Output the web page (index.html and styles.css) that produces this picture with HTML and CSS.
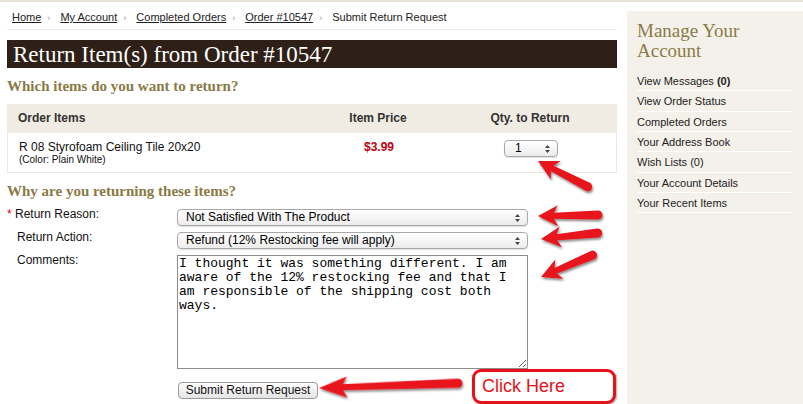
FILE: index.html
```html
<!DOCTYPE html>
<html lang="en">
<head>
  <meta charset="UTF-8">
  <meta name="viewport" content="width=device-width, initial-scale=1.0">
  <link rel="stylesheet" href="styles.css">
  <title>Submit Return Request</title>
</head>
<body>
  <div class="page">
    <div class="main">
      <div class="crumbs">
        <a href="#">Home</a><span class="sep">›</span>
        <a href="#">My Account</a><span class="sep">›</span>
        <a href="#">Completed Orders</a><span class="sep">›</span>
        <a href="#">Order #10547</a><span class="sep">›</span>
        <span>Submit Return Request</span>
      </div>

      <h1 class="title">Return Item(s) from Order #10547</h1>

      <h2 class="section">Which items do you want to return?</h2>
      <div class="items">
        <div class="items-head">
          <div>Order Items</div>
          <div class="center">Item Price</div>
          <div class="center">Qty. to Return</div>
        </div>
        <div class="items-row">
          <div>
            <div class="item-name">R 08 Styrofoam Ceiling Tile 20x20</div>
            <div class="item-opt">(Color: Plain White)</div>
          </div>
          <div class="center price">$3.99</div>
          <div class="center">
            <select class="qty">
              <option>1</option>
              <option>0</option>
            </select>
          </div>
        </div>
      </div>

      <h2 class="section">Why are you returning these items?</h2>
      <form class="return-form">
        <label class="req"><span class="star">*</span> Return Reason:</label>
        <select class="wide">
          <option>Not Satisfied With The Product</option>
          <option>Damaged In Shipping</option>
          <option>Wrong Item Received</option>
        </select>

        <label>Return Action:</label>
        <select class="wide">
          <option>Refund (12% Restocking fee will apply)</option>
          <option>Exchange</option>
        </select>

        <label>Comments:</label>
        <textarea class="comments">I thought it was something different. I am aware of the 12% restocking fee and that I am responsible of the shipping cost both ways.</textarea>

        <div></div>
        <div class="actions">
          <button type="button" class="submit">Submit Return Request</button>
        </div>
      </form>
    </div>

    <aside class="sidebar">
      <h3 class="side-title">Manage Your Account</h3>
      <ul class="side-links">
        <li><a href="#">View Messages <b>(0)</b></a></li>
        <li><a href="#">View Order Status</a></li>
        <li><a href="#">Completed Orders</a></li>
        <li><a href="#">Your Address Book</a></li>
        <li><a href="#">Wish Lists (0)</a></li>
        <li><a href="#">Your Account Details</a></li>
        <li><a href="#">Your Recent Items</a></li>
      </ul>
    </aside>
  </div>

  <!-- annotations drawn over the page -->
  <div class="callout">Click Here</div>
  <svg class="arrows" width="803" height="404" viewBox="0 0 803 404">
    <defs>
      <filter id="shadow" x="-20%" y="-50%" width="140%" height="200%">
        <feDropShadow dx="1" dy="2" stdDeviation="1.2" flood-color="#000" flood-opacity="0.45"/>
      </filter>
    </defs>
    <g fill="#e8141c" filter="url(#shadow)">
      <path transform="translate(538 161) rotate(27.5)" d="M0 0L20-10.5L16-3L56-4.5A4.5 4.5 0 0 1 56 4.5L16 3L20 10.5Z"/>
      <path transform="translate(538 216) rotate(-1)" d="M0 0L20-10.5L16-3L60-4.5A4.5 4.5 0 0 1 60 4.5L16 3L20 10.5Z"/>
      <path transform="translate(541 239) rotate(-6)" d="M0 0L20-10.5L16-3L57-4.5A4.5 4.5 0 0 1 57 4.5L16 3L20 10.5Z"/>
      <path transform="translate(541 277) rotate(-23)" d="M0 0L20-10.5L16-3L56-4.5A4.5 4.5 0 0 1 56 4.5L16 3L20 10.5Z"/>
      <path transform="translate(319 388) rotate(-2)" d="M0 0L28-10.5L24-3L139-4.5A4.5 4.5 0 0 1 139 4.5L24 3L28 10.5Z"/>
    </g>
  </svg>
</body>
</html>
```

FILE: styles.css
```css
body {
  margin: 0;
  width: 803px;
  height: 404px;
  overflow: hidden;
  font-family: "Liberation Sans", Arial, sans-serif;
  color: #222;
  background: #fff;
  position: relative;
}

.page {
  display: flex;
  gap: 10px;
  padding-left: 7px;
  border-top: 2px solid #e9e4d8;
  min-height: 402px;
}

.main {
  width: 610px;
  flex: none;
}

/*migas de pan*/
.crumbs {
  padding: 8px 5px 4px;
  font-size: 11px;
  line-height: 14px;
  border-bottom: 1px solid #ece8df;
}

.crumbs a {
  color: #222;
  text-decoration: underline;
}

.crumbs .sep {
  color: #999;
  font-size: 9px;
  margin: 0 7px 0 6px;
}

.title {
  margin: 10px 0 0;
  height: 28px;
  line-height: 29px;
  padding-left: 6px;
  background: #2e2017;
  color: #fff;
  font-family: "Liberation Serif", "Times New Roman", serif;
  font-size: 23px;
  font-weight: normal;
}

.section {
  margin: 9px 0;
  font-family: "Liberation Serif", "Times New Roman", serif;
  font-size: 15px;
  line-height: 18px;
  font-weight: bold;
  color: #8a7a46;
}

/*tabla de productos*/
.items-head,
.items-row {
  display: grid;
  grid-template-columns: 306px 130px 174px;
}

.items-head {
  height: 29px;
  line-height: 29px;
  background: #f0ece3;
  font-size: 12px;
  font-weight: bold;
  color: #333;
}

.items-head > div:first-child,
.items-row > div:first-child {
  padding-left: 11px;
}

.items-row {
  padding: 7px 0 7px;
  border: 1px solid #ece8df;
  border-top: none;
  height: 25px;
}

.center {
  text-align: center;
}

.item-name {
  font-size: 12px;
  line-height: 14px;
  color: #111;
}

.item-opt {
  font-size: 10px;
  line-height: 11px;
  color: #111;
}

.price {
  font-size: 12px;
  line-height: 14px;
  font-weight: bold;
  color: #c00010;
}

/*selects tipo mac*/
select {
  appearance: none;
  -webkit-appearance: none;
  box-sizing: border-box;
  height: 17px;
  margin: 0;
  padding: 0 20px 0 8px;
  border: 1px solid #a8a8a8;
  border-radius: 4px;
  font-family: "Liberation Sans", Arial, sans-serif;
  font-size: 12px;
  line-height: 15px;
  color: #000;
  background: url("data:image/svg+xml,%3Csvg xmlns='http://www.w3.org/2000/svg' width='5' height='8'%3E%3Cpath d='M0 3L2.5 0L5 3Z M0 5L2.5 8L5 5Z' fill='%23444'/%3E%3C/svg%3E") no-repeat right 7px center,
    linear-gradient(#ffffff, #ececec);
  box-shadow: 0 1px 1px rgba(0, 0, 0, 0.12);
}

.qty {
  width: 54px;
  padding-left: 10px;
  vertical-align: top;
}

.return-form {
  display: grid;
  grid-template-columns: 170px 351px;
  row-gap: 6px;
  align-items: start;
}

.return-form label {
  margin-top: -1px;
  font-size: 12px;
  line-height: 12px;
  padding-left: 10px;
  color: #111;
}

.return-form label.req {
  padding-left: 0;
}

.star {
  color: #d00;
}

.wide {
  width: 351px;
}

.comments {
  box-sizing: border-box;
  width: 351px;
  height: 114px;
  margin: 0;
  padding: 1px 1px;
  border: 1px solid #8e8e8e;
  font-family: "Liberation Mono", "Courier New", monospace;
  font-size: 13px;
  line-height: 14px;
  color: #000;
  resize: both;
}

.actions {
  padding-top: 5px;
}

.submit {
  box-sizing: border-box;
  width: 140px;
  height: 17px;
  margin: 0 0 0 1px;
  padding: 0;
  border: 1px solid #999;
  border-radius: 4px;
  background: linear-gradient(#ffffff, #e4e4e4);
  font-family: "Liberation Sans", Arial, sans-serif;
  font-size: 12px;
  line-height: 15px;
  color: #111;
  cursor: pointer;
}

/*menu lateral*/
.sidebar {
  flex: 1;
  margin-top: 9px;
  padding: 10px 11px 0 10px;
  background: #f4f1ea;
}

.side-title {
  margin: 0 0 10px;
  font-family: "Liberation Serif", "Times New Roman", serif;
  font-size: 19px;
  line-height: 20px;
  font-weight: normal;
  color: #8b7b47;
}

.side-links {
  list-style: none;
  margin: 0;
  padding: 0;
}

.side-links li {
  border-bottom: 1px solid #fff;
  height: 19.33px;
  line-height: 20px;
  font-size: 11px;
}

.side-links a {
  color: #222;
  text-decoration: none;
}

/*notas encima*/
.callout {
  position: absolute;
  left: 472px;
  top: 369px;
  box-sizing: border-box;
  width: 144px;
  height: 35px;
  padding-left: 7px;
  border: 3px solid #e8101a;
  border-radius: 9px;
  background: #fff;
  box-shadow: 1px 1px 2px rgba(0, 0, 0, 0.35);
  font-size: 18px;
  line-height: 29px;
  color: #e8101a;
}

.arrows {
  position: absolute;
  left: 0;
  top: 0;
  pointer-events: none;
}
```
